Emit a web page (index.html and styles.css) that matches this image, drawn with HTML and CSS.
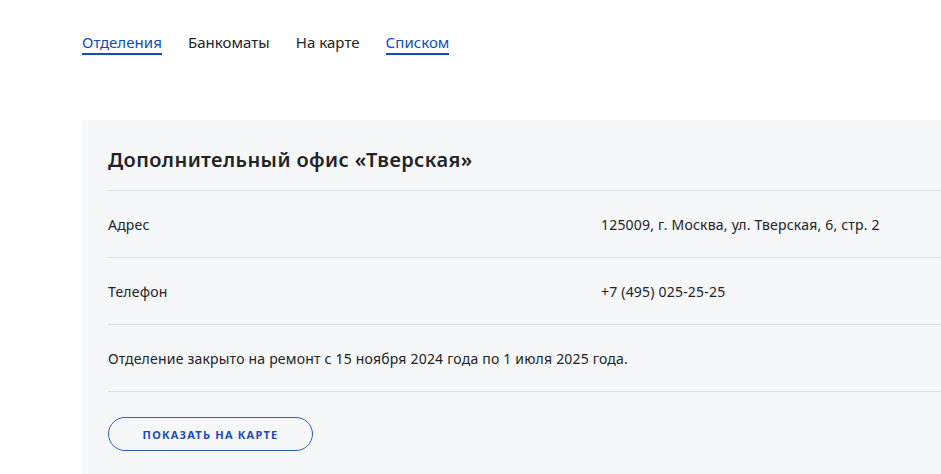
FILE: index.html
```html
<!DOCTYPE html>
<html lang="ru">
<head>
<meta charset="utf-8">
<title>Отделения</title>
<link rel="stylesheet" href="styles.css">
</head>
<body>
<div class="page">
  <nav class="tabs">
    <a class="tab active">Отделения</a>
    <a class="tab">Банкоматы</a>
    <a class="tab">На карте</a>
    <a class="tab active">Списком</a>
  </nav>
  <section class="card">
    <h2 class="title">Дополнительный офис «Тверская»</h2>
    <div class="row">
      <div class="label">Адрес</div>
      <div class="value">125009, г. Москва, ул. Тверская, 6, стр. 2</div>
    </div>
    <div class="row">
      <div class="label">Телефон</div>
      <div class="value">+7 (495) 025-25-25</div>
    </div>
    <div class="row note">Отделение закрыто на ремонт с 15 ноября 2024 года по 1 июля 2025 года.</div>
    <div class="actions">
      <button class="btn">Показать на карте</button>
    </div>
  </section>
</div>
</body>
</html>
```

FILE: styles.css
```css
html, body {
  margin: 0;
  padding: 0;
  background: #fff;
  overflow: hidden;
}
body {
  font-family: "Noto Sans", "Open Sans", sans-serif;
  color: #222325;
  width: 941px;
  height: 474px;
}
.page {
  padding: 32px 0 0 82px;
}
.tabs {
  display: flex;
  gap: 26px;
  height: 23px;
}
.tab {
  font-size: 15px;
  line-height: 20px;
  color: #222325;
  letter-spacing: 0.05px;
  border-bottom: 2px solid transparent;
}
.tab.active {
  color: #0d4cc2;
  border-bottom-color: #0d4cc2;
}
.card {
  margin-top: 65px;
  background: #f6f7f9;
  padding: 26px 0 40px 26px;
  height: 357px;
  box-sizing: border-box;
}
.title {
  margin: 0;
  font-size: 20px;
  line-height: 28px;
  font-weight: 600;
  letter-spacing: 0.4px;
  padding-bottom: 16px;
  border-bottom: 1px solid #dcdee3;
}
.row {
  display: grid;
  grid-template-columns: 493px 1fr;
  height: 66px;
  align-items: center;
  border-bottom: 1px solid #dcdee3;
  font-size: 14px;
  letter-spacing: 0.2px;
}
.row.note {
  display: flex;
}
.actions {
  padding-top: 25px;
}
.btn {
  width: 205px;
  height: 34px;
  border: 1px solid #2c5fc4;
  border-radius: 17px;
  background: transparent;
  color: #1a4db8;
  font-family: inherit;
  font-size: 11px;
  font-weight: 700;
  letter-spacing: 1.2px;
  text-transform: uppercase;
}
```
